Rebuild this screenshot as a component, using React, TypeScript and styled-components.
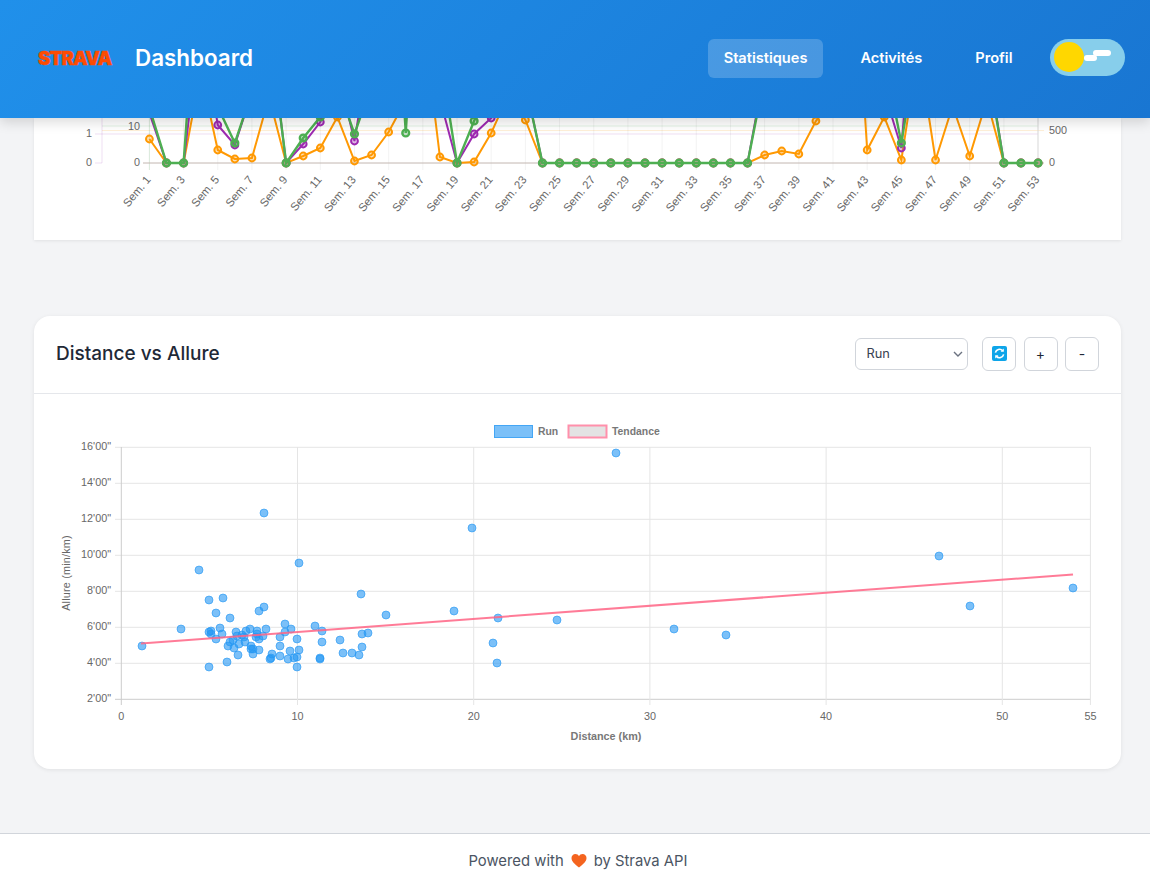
import React from "react";
import styled, { createGlobalStyle } from "styled-components";

const GlobalStyle = createGlobalStyle`
  html, body {
    margin: 0;
    padding: 0;
    background: #f3f4f6;
    font-family: Inter, "Noto Sans", sans-serif;
  }
  * {
    box-sizing: border-box;
  }
`;

const Page = styled.div`
  height: 885px;
  overflow: hidden;
  display: flex;
  flex-direction: column;
`;

const Header = styled.header`
  position: relative;
  z-index: 2;
  height: 118px;
  flex: none;
  display: flex;
  align-items: center;
  justify-content: space-between;
  padding: 0 25px 2px 38px;
  background: linear-gradient(135deg, #2090ea, #1976d2);
  box-shadow: 0 4px 12px rgba(0, 0, 0, 0.15);
`;

const Brand = styled.div`
  display: flex;
  align-items: center;
  gap: 23px;
`;

const Logo = styled.span`
  font-family: Inter, sans-serif;
  font-size: 18.5px;
  font-weight: 900;
  line-height: 14px;
  width: 74px;
  color: #fc4c02;
  letter-spacing: -0.8px;
  -webkit-text-stroke: 0.5px #fc4c02;
`;

const Title = styled.h1`
  margin: 0 0 1px;
  color: #fff;
  font-size: 22.4px;
  font-weight: 600;
`;

const Nav = styled.nav`
  display: flex;
  align-items: flex-start;
  gap: 22px;
`;

const NavLink = styled.a<{ $active?: boolean }>`
  height: 39px;
  padding: 0 15.5px 1px;
  display: flex;
  align-items: center;
  color: #fff;
  font-size: 14.6px;
  font-weight: 600;
  border-radius: 6px;
  background: ${(p) => (p.$active ? "rgba(255, 255, 255, 0.2)" : "transparent")};
`;

const ThemeToggle = styled.div`
  position: relative;
  width: 75px;
  height: 37px;
  border-radius: 19px;
  background: #87ceeb;
`;

const Sun = styled.span`
  position: absolute;
  left: 4px;
  top: 3px;
  width: 30px;
  height: 30px;
  border-radius: 50%;
  background: #ffd700;
`;

const Cloud = styled.span<{ $left: number; $top: number; $width: number }>`
  position: absolute;
  left: ${(p) => p.$left}px;
  top: ${(p) => p.$top}px;
  width: ${(p) => p.$width}px;
  height: 6px;
  border-radius: 3px;
  background: #fff;
`;

const Main = styled.main`
  flex: none;
  height: 715px;
  padding: 0 29px 0 34px;
  display: flex;
  flex-direction: column;
  gap: 76px;
`;

const ChartTail = styled.section`
  height: 122px;
  flex: none;
  background: #fff;
  box-shadow: 0 1px 3px rgba(0, 0, 0, 0.08);
`;

const Card = styled.section`
  height: 453px;
  flex: none;
  background: #fff;
  border-radius: 16px;
  box-shadow: 0 1px 4px rgba(0, 0, 0, 0.08);
`;

const CardHeader = styled.div`
  height: 78px;
  display: flex;
  align-items: center;
  justify-content: space-between;
  padding: 0 22px 2px;
  border-bottom: 1px solid #e5e7eb;
`;

const CardTitle = styled.h2`
  margin: 0 0 1px;
  color: #1f2937;
  font-size: 19px;
  font-weight: 500;
`;

const Controls = styled.div`
  display: flex;
  align-items: center;
  gap: 7.5px;
`;

const TypeSelect = styled.select`
  appearance: none;
  width: 113px;
  height: 32px;
  margin-right: 7px;
  padding: 0 11px;
  color: #374151;
  font-family: Inter, sans-serif;
  font-size: 12.8px;
  background: #fff
    url("data:image/svg+xml,%3Csvg xmlns='http://www.w3.org/2000/svg' width='10' height='6'%3E%3Cpath d='M1 1l4 4 4-4' fill='none' stroke='%236b7280' stroke-width='1.4'/%3E%3C/svg%3E")
    no-repeat right 4px center;
  border: 1px solid #d1d5db;
  border-radius: 6px;
`;

const IconButton = styled.button`
  width: 34px;
  height: 34px;
  padding: 0 0 1px;
  display: flex;
  align-items: center;
  justify-content: center;
  color: #1f2937;
  font-family: Inter, sans-serif;
  font-size: 14px;
  background: #fff;
  border: 1px solid #d1d5db;
  border-radius: 6px;
`;

const ChartSvg = styled.svg`
  display: block;
  width: 100%;
  opacity: 0.99;
`;

const AxisText = styled.text`
  font-family: "Liberation Sans", Arial, sans-serif;
  font-size: 10.8px;
  fill: #666;
`;

const WeekLabel = styled(AxisText)`
  font-size: 11.4px;
`;

const AxisTitle = styled(AxisText)`
  font-weight: 700;
  fill: #777;
`;

const SideTitle = styled(AxisText)`
  letter-spacing: 0.2px;
`;

const LegendText = styled(AxisText)`
  font-size: 10.4px;
  font-weight: 700;
  fill: #777;
`;

const Footer = styled.footer`
  flex: 1;
  display: flex;
  align-items: center;
  justify-content: center;
  gap: 7px;
  padding: 2px 0 0 6px;
  color: #4b5563;
  font-size: 14.85px;
  background: #fff;
  border-top: 1px solid #d1d5db;
`;

const ORANGE = "#ff9800";
const PURPLE = "#9c27b0";
const GREEN = "#4caf50";

const weekX = (week: number) => 149.4 + (week - 1) * 17.09;

// y pixel per week, values above the card are cut by the header
const orange = [
  139, 163, 163, 72, 150, 159, 158, 97, 163, 156, 148, 117, 161, 155, 132, 100, 17, 157, 163, 162,
  133, 95, 120, 163, 163, 163, 163, 163, 163, 163, 163, 163, 163, 163, 163, 163, 155, 151, 154, 121,
  100, -120, 150, 117, 160, 49, 160, 106, 156, 100, 163, 163, 163,
];

const purple = [
  113, 163, 163, 20, 125, 145, 92, 25, 163, 144, 122, 70, 141, 36, 10, 30, 20, 99, 163, 134,
  118, 60, 84, 163, 163, 163, 163, 163, 163, 163, 163, 163, 163, 163, 163, 163, 70, 20, 20, 20,
  20, 20, 20, 92, 148, -70, 20, 20, 20, 56, 163, 163, 163,
];

const green = [
  108, 163, 163, -77, 107, 143, 92, 25, 163, 138, 117, 85, 134, 85, -150, 133, -150, 56, 163, 121,
  84, 20, 84, 163, 163, 163, 163, 163, 163, 163, 163, 163, 163, 163, 163, 163, 76, 20, 20, 20,
  20, 20, 20, 58, 143, 37, 20, 20, 20, 60, 163, 163, 163,
];

const WeeklySeries: React.FC<{ data: number[]; color: string; width?: number }> = ({ data, color, width = 2 }) => (
  <>
    <polyline
      points={data.map((y, i) => `${weekX(i + 1)},${y}`).join(" ")}
      fill="none"
      stroke={color}
      strokeWidth={width}
    />
    {data.map((y, i) => (
      <circle key={i} cx={weekX(i + 1)} cy={y} r={3.4} fill={color} fillOpacity={0.3} stroke={color} strokeWidth={width} />
    ))}
  </>
);

const WeeklyChart: React.FC = () => {
  const labelled = Array.from({ length: 27 }, (_, i) => i * 2 + 1);
  return (
    <ChartSvg viewBox="34 118 1087 122" height={122}>
      <line x1={102} x2={1038} y1={126} y2={126} stroke={GREEN} strokeOpacity={0.15} />
      <line x1={102} x2={1044} y1={130.5} y2={130.5} stroke={ORANGE} strokeOpacity={0.15} />
      <line x1={95} x2={1038} y1={134} y2={134} stroke={PURPLE} strokeOpacity={0.15} />
      {labelled.map((w) => (
        <line key={w} x1={weekX(w)} x2={weekX(w)} y1={118} y2={170} stroke="#000" strokeOpacity={0.05} />
      ))}
      <line x1={102} x2={102} y1={118} y2={163} stroke={PURPLE} strokeOpacity={0.15} />
      <line x1={149.4} x2={149.4} y1={118} y2={170} stroke={GREEN} strokeOpacity={0.15} />
      <line x1={1038} x2={1038} y1={118} y2={163} stroke="#ddd" />
      <line x1={95} x2={102} y1={163} y2={163} stroke={PURPLE} strokeOpacity={0.15} />
      <line x1={143} x2={1044} y1={163} y2={163} stroke="#c2b6b0" />
      <WeeklySeries data={orange} color={ORANGE} />
      <WeeklySeries data={purple} color={PURPLE} />
      <WeeklySeries data={green} color={GREEN} width={2.4} />
      <AxisText x={92} y={137} textAnchor="end">1</AxisText>
      <AxisText x={92} y={166} textAnchor="end">0</AxisText>
      <AxisText x={140} y={130} textAnchor="end">10</AxisText>
      <AxisText x={140} y={166} textAnchor="end">0</AxisText>
      <AxisText x={1049} y={134}>500</AxisText>
      <AxisText x={1049} y={166}>0</AxisText>
      {labelled.map((w) => (
        <WeekLabel key={w} textAnchor="end" transform={`translate(${weekX(w) + 2} 180) rotate(-50)`}>
          Sem. {w}
        </WeekLabel>
      ))}
    </ChartSvg>
  );
};

const distanceX = (km: number) => 121.3 + km * 17.62;
const paceY = (min: number) => 699.3 - (min - 2) * 18;

const scatter: [number, number][] = [
  [142, 646], [181, 629], [209, 600], [223, 598], [216, 613], [230, 618], [259, 611], [264, 607],
  [220, 628], [209, 632], [211, 631], [211, 634], [222, 634], [216, 639], [236, 632], [228, 646],
  [230, 642], [233, 640], [234, 648], [239, 644], [237, 636], [242, 635], [244, 637], [245, 642],
  [246, 631], [250, 629], [251, 646], [251, 649], [253, 649], [253, 654], [259, 650], [257, 631],
  [257, 634], [256, 637], [259, 639], [263, 636], [266, 629], [238, 655], [227, 662], [209, 667],
  [272, 654], [271, 658], [270, 659], [280, 656], [280, 646], [280, 637], [285, 632], [285, 624],
  [291, 629], [290, 651], [288, 659], [294, 658], [297, 657], [299, 650], [297, 639], [297, 667],
  [315, 626], [322, 631], [322, 642], [320, 659], [320, 658], [340, 640], [343, 653], [352, 653],
  [361, 594], [386, 615], [454, 611], [498, 618], [557, 620], [362, 634], [368, 633], [362, 647],
  [359, 655], [493, 643], [497, 663], [199, 570], [264, 513], [299, 563], [472, 528], [616, 453],
  [939, 556], [970, 606], [1073, 588], [674, 629], [726, 635],
];

const DistanceChart: React.FC = () => {
  const kmTicks = [0, 10, 20, 30, 40, 50, 55];
  const paceTicks = [16, 14, 12, 10, 8, 6, 4, 2];
  return (
    <ChartSvg viewBox="34 394 1087 375" height={375}>
      <rect x={494.5} y={425.5} width={38} height={12} fill="#2196f3" fillOpacity={0.6} stroke="#42a5f5" />
      <LegendText x={538} y={435}>Run</LegendText>
      <rect x={568.5} y={425.5} width={38} height={12} fill="#e3e3e3" stroke="#ff8fab" strokeWidth={2} />
      <LegendText x={612} y={435}>Tendance</LegendText>

      {paceTicks.map((m) => (
        <g key={m}>
          <line x1={115} x2={1090.5} y1={paceY(m)} y2={paceY(m)} stroke={m === 2 ? "#ccc" : "#e5e5e5"} />
          <AxisText x={111} y={paceY(m) + 3} textAnchor="end">{`${m}'00"`}</AxisText>
        </g>
      ))}
      {kmTicks.map((k) => (
        <g key={k}>
          <line x1={distanceX(k)} x2={distanceX(k)} y1={447} y2={705} stroke={k === 0 ? "#ccc" : "#e5e5e5"} />
          <AxisText x={distanceX(k)} y={720} textAnchor="middle">{k}</AxisText>
        </g>
      ))}
      <AxisTitle x={606} y={740} textAnchor="middle">Distance (km)</AxisTitle>
      <SideTitle textAnchor="middle" transform="translate(70 573) rotate(-90)">Allure (min/km)</SideTitle>

      {scatter.map(([x, y], i) => (
        <circle key={i} cx={x} cy={y} r={4} fill="#2196f3" fillOpacity={0.6} stroke="#2196f3" strokeOpacity={0.6} />
      ))}
      <line x1={141} x2={1073} y1={643.5} y2={574.5} stroke="#ff6384" strokeOpacity={0.85} strokeWidth={2} />
    </ChartSvg>
  );
};

const RefreshIcon: React.FC = () => (
  <svg width="15" height="15" viewBox="0 0 15 15">
    <rect width="15" height="15" rx="2" fill="#0ea5e9" />
    <path d="M3.4 6.6A4.2 4.2 0 0 1 10.6 4.6" fill="none" stroke="#fff" strokeWidth="1.6" />
    <path d="M11.8 2.6v3.2H8.6z" fill="#fff" />
    <path d="M11.6 8.4A4.2 4.2 0 0 1 4.4 10.4" fill="none" stroke="#fff" strokeWidth="1.6" />
    <path d="M3.2 12.4V9.2h3.2z" fill="#fff" />
  </svg>
);

const HeartIcon: React.FC = () => (
  <svg width="16" height="15" viewBox="0 0 16 15">
    <path
      d="M8 14.5C3.5 11 .5 8.4.5 5A3.9 3.9 0 0 1 4.4 1C6 1 7.300 1.900 8 3.200 8.700 1.900 10 1 11.600 1A3.900 3.900 0 0 1 15.500 5C15.500 8.400 12.500 11 8 14.500Z"
      fill="#f4641f"
    />
  </svg>
);

export default function App() {
  return (
    <Page>
      <GlobalStyle />
      <Header>
        <Brand>
          <Logo>STRAVA</Logo>
          <Title>Dashboard</Title>
        </Brand>
        <Nav>
          <NavLink $active>Statistiques</NavLink>
          <NavLink>Activités</NavLink>
          <NavLink>Profil</NavLink>
          <ThemeToggle>
            <Sun />
            <Cloud $left={34} $top={16} $width={13} />
            <Cloud $left={43} $top={11} $width={18} />
          </ThemeToggle>
        </Nav>
      </Header>
      <Main>
        <ChartTail>
          <WeeklyChart />
        </ChartTail>
        <Card>
          <CardHeader>
            <CardTitle>Distance vs Allure</CardTitle>
            <Controls>
              <TypeSelect defaultValue="Run">
                <option>Run</option>
                <option>Ride</option>
              </TypeSelect>
              <IconButton aria-label="Réinitialiser">
                <RefreshIcon />
              </IconButton>
              <IconButton>+</IconButton>
              <IconButton>-</IconButton>
            </Controls>
          </CardHeader>
          <DistanceChart />
        </Card>
      </Main>
      <Footer>
        Powered with <HeartIcon /> by Strava API
      </Footer>
    </Page>
  );
}
